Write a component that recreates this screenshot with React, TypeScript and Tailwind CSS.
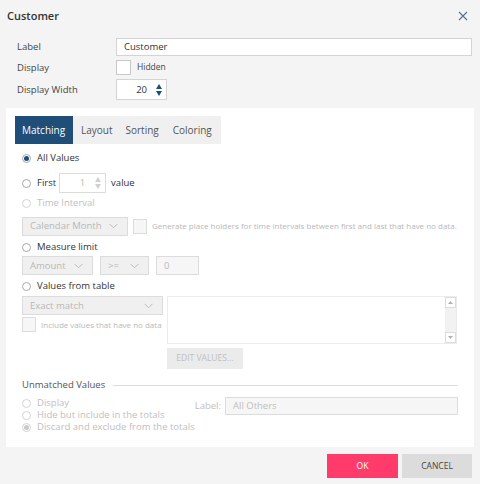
import React from "react";

const font = { fontFamily: '"Open Sans", "Noto Sans", sans-serif' };

function Radio({ checked, disabled }: { checked?: boolean; disabled?: boolean }) {
  return (
    <span
      className={`w-[9px] h-[9px] rounded-full border flex items-center justify-center shrink-0 bg-white ${
        disabled ? "border-[#d4d4d4]" : "border-[#a8a8a8]"
      }`}
    >
      {checked && (
        <span className={`w-[5px] h-[5px] rounded-full ${disabled ? "bg-[#c8c8c8]" : "bg-[#1f4e79]"}`} />
      )}
    </span>
  );
}

function Chevron({ className = "" }: { className?: string }) {
  return (
    <svg width="9" height="6" viewBox="0 0 9 6" className={className}>
      <path d="M0.5 0.8 L4.5 4.8 L8.5 0.8" fill="none" stroke="currentColor" strokeWidth="0.9" />
    </svg>
  );
}

function Select({ label, w }: { label: string; w: string }) {
  return (
    <div className={`${w} h-[19px] border border-[#dcdcdc] bg-[#f0f0f0] flex items-center justify-between pl-[7px] pr-[9px] text-[9.5px] text-[#b8b8b8]`}>
      <span>{label}</span>
      <Chevron className="text-[#b8b8b8]" />
    </div>
  );
}

export default function App() {
  return (
    <div style={font} className="w-[480px] h-[484px] bg-[#f4f4f4] flex flex-col text-[#444] overflow-hidden leading-[1.2]">
      {/* header */}
      <div className="h-[32px] flex items-center justify-between pl-[7px] pr-[12px]">
        <span className="text-[11px] font-semibold text-[#333]">Customer</span>
        <svg width="10" height="10" viewBox="0 0 10 10">
          <path d="M1 1 L9 9 M9 1 L1 9" stroke="#5a6f86" strokeWidth="1.1" />
        </svg>
      </div>

      {/* top fields */}
      <div className="flex flex-col pl-[17px] pr-[8px] gap-[3px] text-[9.5px] mt-[6px]">
        <div className="flex items-center h-[18px]">
          <span className="w-[99px]">Label</span>
          <div className="flex-1 h-[18px] border border-[#d4d4d4] bg-white flex items-center px-[7px] text-[9.5px] text-[#333]">
            Customer
          </div>
        </div>
        <div className="flex items-center h-[17px]">
          <span className="w-[99px]">Display</span>
          <span className="w-[15px] h-[15px] border border-[#c8c8c8] bg-white" />
          <span className="ml-[6px] text-[8.5px]">Hidden</span>
        </div>
        <div className="flex items-center h-[21px]">
          <span className="w-[99px]">Display Width</span>
          <div className="w-[51px] h-[21px] border border-[#d4d4d4] bg-white flex items-center justify-end pr-[4px] text-[9.5px] text-[#333]">
            <span className="mr-[9px]">20</span>
            <span className="flex flex-col items-center gap-[2px]">
              <svg width="6" height="5" viewBox="0 0 6 5"><path d="M3 0 L6 5 L0 5 Z" fill="#1f4e79" /></svg>
              <svg width="6" height="5" viewBox="0 0 6 5"><path d="M0 0 L6 0 L3 5 Z" fill="#1f4e79" /></svg>
            </span>
          </div>
        </div>
      </div>

      {/* main panel */}
      <div className="mx-[6px] mt-[8px] bg-white h-[339px] pl-[9px] pr-[16px] pt-[8px] flex flex-col">
        <div className="flex w-[206px] h-[28px] bg-[#f0f0f0] text-[10px] text-[#555]">
          <div className="bg-[#1f4e79] text-white flex items-center px-[7px] w-[58px]">Matching</div>
          <div className="flex items-center pl-[8px]">Layout</div>
          <div className="flex items-center pl-[13px]">Sorting</div>
          <div className="flex items-center pl-[14px]">Coloring</div>
        </div>

        <div className="pl-[7px] text-[9.5px]">
          <div className="flex items-center gap-[6px] h-[14px] mt-[7px]">
            <Radio checked />
            <span className="text-[#333]">All Values</span>
          </div>

          <div className="flex items-center h-[20px] mt-[8px]">
            <Radio />
            <span className="ml-[6px] text-[#333]">First</span>
            <div className="ml-[3px] w-[47px] h-[20px] border border-[#dcdcdc] bg-white flex items-center justify-end pr-[4px] text-[#bbb]">
              <span className="mr-[10px]">1</span>
              <span className="flex flex-col items-center gap-[2px]">
                <svg width="6" height="5" viewBox="0 0 6 5"><path d="M3 0 L6 5 L0 5 Z" fill="#d0d0d0" /></svg>
                <svg width="6" height="5" viewBox="0 0 6 5"><path d="M0 0 L6 0 L3 5 Z" fill="#d0d0d0" /></svg>
              </span>
            </div>
            <span className="ml-[5px] text-[#333]">value</span>
          </div>

          <div className="flex items-center gap-[6px] h-[14px] mt-[3px] text-[#c0c0c0]">
            <Radio disabled />
            <span>Time Interval</span>
          </div>

          <div className="flex items-center mt-[6px] h-[20px]">
            <Select label="Calendar Month" w="w-[106px]" />
            <span className="ml-[5px] w-[14px] h-[15px] border border-[#dcdcdc] bg-[#f6f6f6]" />
            <span className="ml-[5px] text-[8px] text-[#b8b8b8] whitespace-nowrap">
              Generate place holders for time intervals between first and last that have no data.
            </span>
          </div>

          <div className="flex items-center gap-[6px] h-[14px] mt-[4px] text-[#333]">
            <Radio />
            <span>Measure limit</span>
          </div>

          <div className="flex items-center mt-[2px] h-[19px] gap-[7px]">
            <Select label="Amount" w="w-[71px]" />
            <Select label=">=" w="w-[49px]" />
            <div className="w-[43px] h-[19px] border border-[#dcdcdc] bg-[#f6f6f6] flex items-center pl-[7px] text-[#bbb]">0</div>
          </div>

          <div className="flex items-center gap-[6px] h-[14px] mt-[4px] text-[#333]">
            <Radio />
            <span>Values from table</span>
          </div>

          <div className="flex mt-[3px] gap-[4px]">
            <div className="flex flex-col">
              <Select label="Exact match" w="w-[141px]" />
              <div className="flex items-center mt-[2px]">
                <span className="w-[14px] h-[15px] border border-[#dcdcdc] bg-[#f6f6f6]" />
                <span className="ml-[5px] text-[8px] text-[#b8b8b8] whitespace-nowrap">Include values that have no data</span>
              </div>
            </div>
            <div className="flex flex-col">
              <div className="w-[290px] h-[48px] border border-[#ececec] flex justify-end">
                <div className="w-[11px] bg-[#f2f2f2] flex flex-col justify-between">
                  <div className="h-[11px] border border-[#dcdcdc] bg-white flex items-center justify-center">
                    <svg width="5" height="3" viewBox="0 0 5 3"><path d="M2.5 0 L5 3 L0 3 Z" fill="#b0b0b0" /></svg>
                  </div>
                  <div className="h-[11px] border border-[#dcdcdc] bg-white flex items-center justify-center">
                    <svg width="5" height="3" viewBox="0 0 5 3"><path d="M0 0 L5 0 L2.5 3 Z" fill="#b0b0b0" /></svg>
                  </div>
                </div>
              </div>
              <div className="mt-[4px] w-[76px] h-[21px] bg-[#ebebeb] flex items-center justify-center text-[8.5px] text-[#c0c0c0]">
                EDIT VALUES...
              </div>
            </div>
          </div>

          <div className="flex items-center mt-[10px] text-[9.5px] text-[#555] h-[12px]">
            <span>Unmatched Values</span>
            <span className="flex-1 ml-[8px] h-px bg-[#dcdcdc]" />
          </div>

          <div className="flex mt-[6px]">
            <div className="flex flex-col text-[#c0c0c0] text-[9.5px] whitespace-nowrap">
              <div className="flex items-center gap-[6px] h-[12px]">
                <Radio disabled />
                <span>Display</span>
              </div>
              <div className="flex items-center gap-[6px] h-[12px]">
                <Radio disabled />
                <span>Hide but include in the totals</span>
              </div>
              <div className="flex items-center gap-[6px] h-[12px]">
                <Radio disabled checked />
                <span>Discard and exclude from the totals</span>
              </div>
            </div>
            <div className="flex-1 flex items-start justify-end">
              <span className="text-[#c0c0c0] mt-[3px] mr-[4px]">Label:</span>
              <div className="w-[233px] h-[18px] border border-[#dcdcdc] bg-[#f6f6f6] flex items-center pl-[7px] text-[#c0c0c0]">
                All Others
              </div>
            </div>
          </div>
        </div>
      </div>

      {/* footer */}
      <div className="flex justify-end gap-[4px] pr-[8px] mt-[7px]">
        <div className="w-[71px] h-[24px] bg-[#ff3b6b] text-white text-[8.5px] flex items-center justify-center">OK</div>
        <div className="w-[70px] h-[24px] bg-[#dcdcdc] text-[#444] text-[8.5px] flex items-center justify-center">CANCEL</div>
      </div>
    </div>
  );
}
